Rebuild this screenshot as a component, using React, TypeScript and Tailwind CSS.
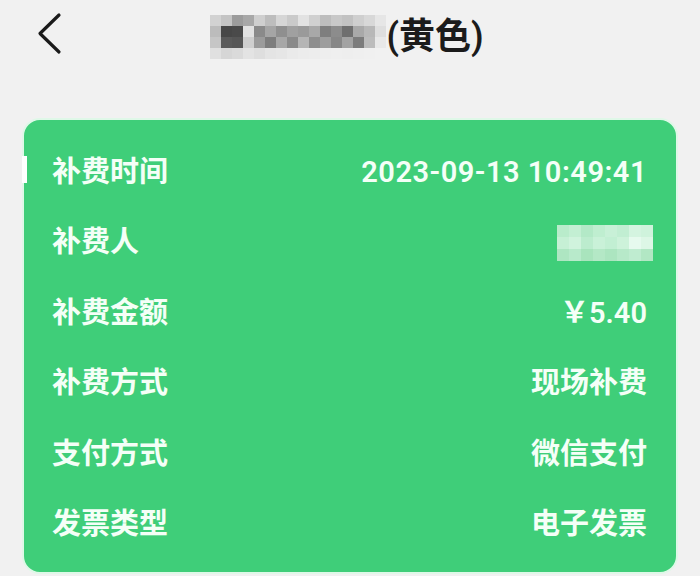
import React from "react";

const titleMosaic: string[][] = [
  ["#d2d2d2","#c4c4c4","#9c9c9c","#a8a8a8","#cfcfcf","#bdbdbd","#d6d6d6","#cacaca","#e2e2e2","#d0d0d0","#bdbdbd","#c8c8c8","#c2c2c2","#cfcfcf","#d8d8d8","#e6e6e6"],
  ["#bcbcbc","#474747","#4a4a4a","#e2e2e2","#8a8a8a","#a5a5a5","#8f8f8f","#a0a0a0","#9a9a9a","#a8a8a8","#7e7e7e","#8c8c8c","#6f6f6f","#a9a9a9","#b8b8b8","#dedede"],
  ["#c6c6c6","#5a5a5a","#565656","#cfcfcf","#9b9b9b","#7d7d7d","#a7a7a7","#8a8a8a","#b5b5b5","#8e8e8e","#9d9d9d","#878787","#a3a3a3","#7c7c7c","#bcbcbc","#e8e8e8"],
  ["#e0e0e0","#d6d6d6","#dadada","#e3e3e3","#dedede","#e4e4e4","#e6e6e6","#eaeaea","#ececec","#ededed","#eeeeee","#efefef","#eeeeee","#efefef","#f0f0f0","#f1f1f1"],
];

const valueMosaic: string[][] = [
  ["#b9eccb","#c3efd3","#b3e9c7","#bfeed0","#c8f0d7","#c1eed2","#d4f4e0","#cff3dc"],
  ["#c6f0d5","#d0f3dd","#bcecce","#c9f1d8","#c2efd3","#cdf2da","#e6faee","#ddf7e6"],
  ["#aee6c2","#b8eacb","#a9e4bd","#b4e8c6","#ace5c0","#b7e9c9","#bfecd0","#b2e7c4"],
];

const rows: { label: string; value: string }[] = [
  { label: "补费时间", value: "2023-09-13 10:49:41" },
  { label: "补费人", value: "__mosaic__" },
  { label: "补费金额", value: "￥5.40" },
  { label: "补费方式", value: "现场补费" },
  { label: "支付方式", value: "微信支付" },
  { label: "发票类型", value: "电子发票" },
];

function Mosaic({ cells, cw, ch }: { cells: string[][]; cw: number; ch: number }) {
  return (
    <div className="flex flex-col blur-[0.6px]">
      {cells.map((r, i) => (
        <div key={i} className="flex">
          {r.map((c, j) => (
            <div key={j} style={{ width: cw, height: ch, background: c }} />
          ))}
        </div>
      ))}
    </div>
  );
}

export default function App() {
  return (
    <div
      className="w-[700px] h-[576px] bg-[#f1f1f1] overflow-hidden relative"
      style={{ fontFamily: 'Roboto, "Noto Sans CJK SC", sans-serif' }}
    >
      {/* header */}
      <div className="h-[74px] relative flex items-center justify-center">
        <svg
          className="absolute left-[34px] top-[12px]"
          width="32"
          height="44"
          viewBox="0 0 32 44"
          fill="none"
        >
          <path d="M25 3 L6 21.5 L25 40" stroke="#1a1a1a" strokeWidth="3.2" strokeLinecap="round" strokeLinejoin="round" />
        </svg>
        <div className="flex items-center ml-[-6px]">
          <Mosaic cells={titleMosaic} cw={11} ch={11} />
          <span className="text-[36px] font-semibold text-[#1b1b1b] leading-none">(黄色)</span>
        </div>
      </div>

      {/* card */}
      <div className="mt-[44px] mx-[22px] h-[456px] rounded-[18px] border-2 border-[#dff8e8] bg-[#3fce79] relative pt-[17px] pl-[28px] pr-[29px]">
        <div className="absolute left-[-2px] top-[36px] w-[5px] h-[27px] bg-white" />
        {rows.map((r, idx) => (
          <div key={r.label} className="h-[70.5px] flex items-center justify-between text-[#f4fff7]">
            <span className="text-[29px] font-semibold leading-none">{r.label}</span>
            {r.value === "__mosaic__" ? (
              <div className="mr-[-6px]">
                <Mosaic cells={valueMosaic} cw={12} ch={12} />
              </div>
            ) : idx === 0 ? (
              <span className="text-[29px] font-semibold leading-none tracking-[0.5px]">{r.value}</span>
            ) : (
              <span className="text-[29px] font-semibold leading-none">{r.value}</span>
            )}
          </div>
        ))}
      </div>
    </div>
  );
}
